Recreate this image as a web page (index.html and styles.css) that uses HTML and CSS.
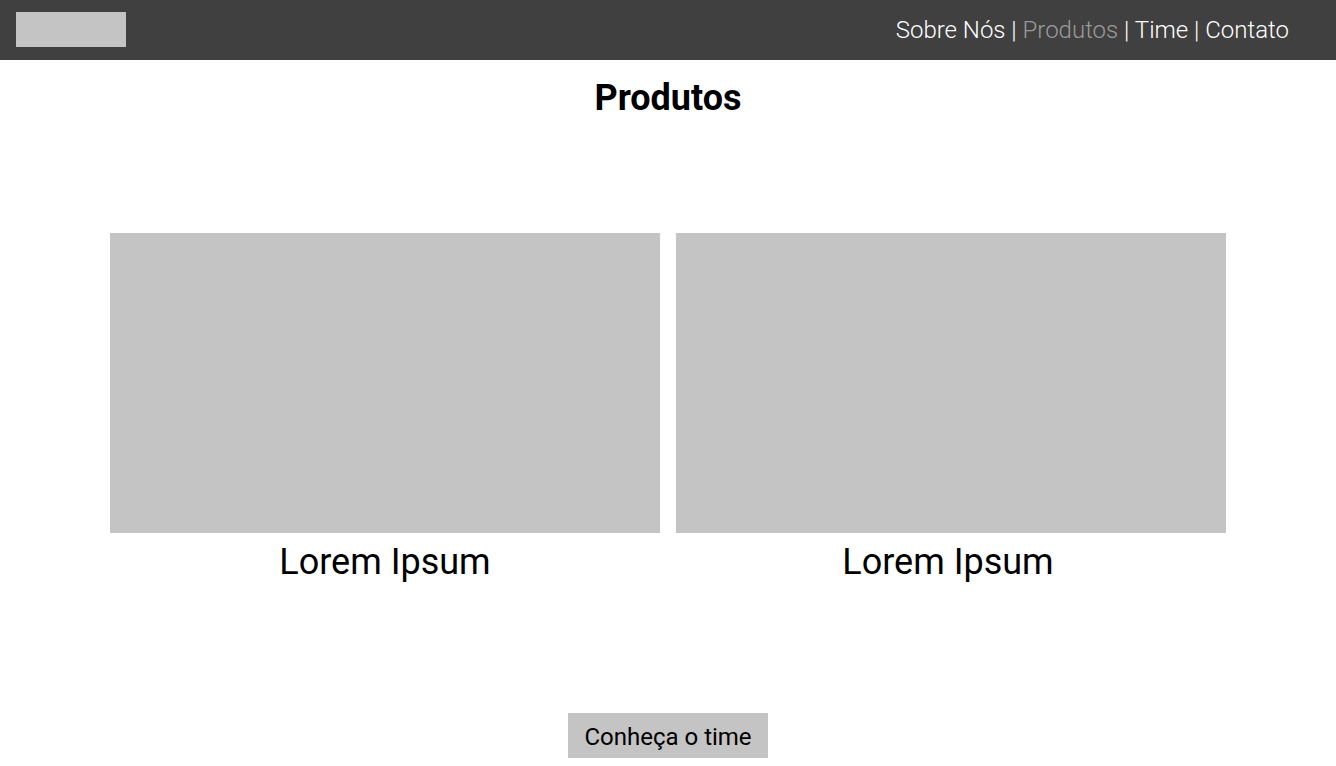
FILE: index.html
```html
<!DOCTYPE html>
<html lang="pt-BR">
<head>
<meta charset="utf-8">
<title>Produtos</title>
<link rel="stylesheet" href="styles.css">
</head>
<body>
<header class="topbar">
  <div class="logo"></div>
  <nav class="nav">
    <a class="nav-link" href="#">Sobre Nós</a><span class="sep"> | </span><a class="nav-link active" href="#">Produtos</a><span class="sep"> | </span><a class="nav-link" href="#">Time</a><span class="sep"> | </span><a class="nav-link" href="#">Contato</a>
  </nav>
</header>
<main class="content">
  <h1 class="title">Produtos</h1>
  <section class="cards">
    <article class="card">
      <div class="card-image"></div>
      <h2 class="card-title">Lorem Ipsum</h2>
    </article>
    <article class="card card-right">
      <div class="card-image"></div>
      <h2 class="card-title">Lorem Ipsum</h2>
    </article>
  </section>
  <div class="actions">
    <a class="button" href="#">Conheça o time</a>
  </div>
</main>
</body>
</html>
```

FILE: styles.css
```css
* { box-sizing: border-box; }

html, body {
  margin: 0;
  padding: 0;
  background: #ffffff;
  font-family: Roboto, "Liberation Sans", Arial, sans-serif;
  color: #000000;
}

.topbar {
  height: 60px;
  background: #404040;
  display: flex;
  align-items: center;
  justify-content: space-between;
  padding: 0 47px 0 16px;
}

.logo {
  width: 110px;
  height: 35px;
  background: #c4c4c4;
  margin-top: -1px;
}

.nav {
  font-size: 24px;
  font-weight: 300;
  color: #ffffff;
  white-space: nowrap;
}

.nav-link {
  color: #ffffff;
  text-decoration: none;
}

.nav-link.active {
  color: #9a9a9a;
}

.content {
  display: flex;
  flex-direction: column;
  align-items: center;
}

.title {
  margin: 17px 0 0;
  font-size: 36px;
  font-weight: 700;
  line-height: 42px;
}

.cards {
  width: 1116px;
  display: grid;
  grid-template-columns: 1fr 1fr;
  gap: 16px;
  margin-top: 114px;
}

.card {
  display: flex;
  flex-direction: column;
  align-items: center;
}

.card-image {
  width: 100%;
  height: 300px;
  background: #c4c4c4;
}

.card-title {
  margin: 8px 0 0;
  font-size: 36px;
  font-weight: 400;
  line-height: 42px;
}

.card-right .card-title {
  margin-right: 6px;
}

.actions {
  margin-top: 130px;
  display: flex;
  justify-content: center;
}

.button {
  width: 200px;
  height: 45px;
  display: flex;
  align-items: center;
  justify-content: center;
  padding-top: 2px;
  background: #c4c4c4;
  color: #000000;
  text-decoration: none;
  font-size: 24px;
  font-weight: 400;
}
```
